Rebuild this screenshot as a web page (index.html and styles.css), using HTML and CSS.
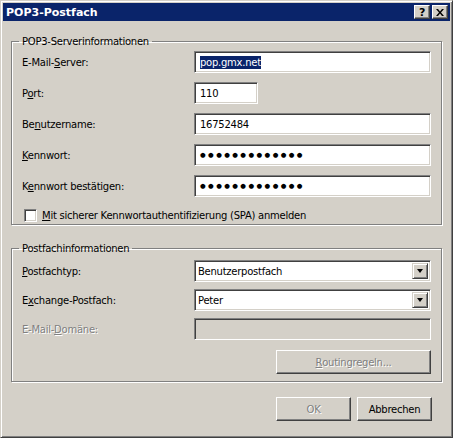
FILE: index.html
```html
<!DOCTYPE html>
<html lang="de">
<head>
    <meta charset="UTF-8">
    <meta name="viewport" content="width=device-width, initial-scale=1.0">
    <title>POP3-Postfach</title>
    <link rel="stylesheet" href="styles.css">
</head>
<body>
    <div class="window">
        <div class="titlebar">
            <span class="title">POP3-Postfach</span>
            <div class="caption-btns">
                <span class="cap-btn">?</span>
                <span class="cap-btn close">
                    <svg width="8" height="7" viewBox="0 0 8 7"><path d="M0 0h2l2 2.5L6 0h2L5 3.5 8 7H6L4 4.5 2 7H0l3-3.5z" fill="#000"/></svg>
                </span>
            </div>
        </div>

        <div class="content">
            <fieldset class="group">
                <legend>POP3-Serverinformationen</legend>
                <div class="form">
                    <label>E-Mail-<u>S</u>erver:</label>
                    <div class="field"><span class="sel">pop.gmx.net</span></div>

                    <label>P<u>o</u>rt:</label>
                    <div class="field short">110</div>

                    <label>Be<u>n</u>utzername:</label>
                    <div class="field">16752484</div>

                    <label><u>K</u>ennwort:</label>
                    <div class="field dots">●●●●●●●●●●●●●</div>

                    <label>K<u>e</u>nnwort bestätigen:</label>
                    <div class="field dots">●●●●●●●●●●●●●</div>
                </div>
                <div class="check">
                    <span class="box"></span>
                    <span><u>M</u>it sicherer Kennwortauthentifizierung (SPA) anmelden</span>
                </div>
            </fieldset>

            <fieldset class="group second">
                <legend>Postfachinformationen</legend>
                <div class="form tight">
                    <label><u>P</u>ostfachtyp:</label>
                    <div class="field combo">Benutzerpostfach<span class="arrow"></span></div>

                    <label>E<u>x</u>change-Postfach:</label>
                    <div class="field combo">Peter<span class="arrow"></span></div>

                    <label class="disabled">E-Mail-<u>D</u>omäne:</label>
                    <div class="field off"></div>
                </div>
                <div class="right">
                    <span class="btn wide disabled"><u>R</u>outingregeln...</span>
                </div>
            </fieldset>

            <div class="actions">
                <span class="btn disabled">OK</span>
                <span class="btn">Abbrechen</span>
            </div>
        </div>
    </div>
</body>
</html>
```

FILE: styles.css
```css
*{
    margin: 0;
    padding: 0;
    box-sizing: border-box;
}
body{
    background: #d4d0c8;
    font-family: "DejaVu Sans", Tahoma, sans-serif;
    font-size: 10px;
    letter-spacing: -0.25px;
    color: #000;
}
u{
    text-decoration: underline;
    text-underline-offset: 1px;
}
.window{
    width: 453px;
    height: 438px;
    background: #d4d0c8;
    border: 1px solid;
    border-color: #d4d0c8 #404040 #404040 #d4d0c8;
    box-shadow: inset 1px 1px 0 #fff, inset -1px -1px 0 #808080;
    padding: 2px;
}
.titlebar{
    height: 18px;
    background: #0a246a;
    display: flex;
    align-items: center;
    justify-content: space-between;
    padding: 0 2px 0 3px;
}
.title{
    color: #fff;
    font-weight: bold;
    font-size: 11px;
    letter-spacing: 0;
}
.caption-btns{
    display: flex;
}
.cap-btn{
    width: 16px;
    height: 14px;
    background: #d4d0c8;
    border: 1px solid;
    border-color: #fff #404040 #404040 #fff;
    box-shadow: inset -1px -1px 0 #808080;
    display: flex;
    align-items: center;
    justify-content: center;
    font-weight: bold;
    font-size: 11px;
    line-height: 1;
}
.cap-btn.close{
    margin-left: 2px;
}
.content{
    padding: 15px 8px 0 8px;
}
.group{
    border: 1px solid #808080;
    box-shadow: 1px 1px 0 #fff, inset 1px 1px 0 #fff;
    padding: 4px 10px 9px 10px;
    height: 189px;
}
.group legend{
    padding: 0 3px;
    margin-left: -3px;
    font-size: 10px;
}
.group.second{
    margin-top: 18px;
    height: 139px;
}
.form{
    display: grid;
    grid-template-columns: 172px 1fr;
    row-gap: 9px;
    align-items: center;
}
.form.tight{
    row-gap: 7px;
    padding-top: 2px;
}
.disabled{
    color: #808080;
    text-shadow: 1px 1px 0 #fff;
}
.field{
    height: 22px;
    background: #fff;
    border: 1px solid;
    border-color: #808080 #fff #fff #808080;
    box-shadow: inset 1px 1px 0 #404040, inset -1px -1px 0 #d4d0c8;
    display: flex;
    align-items: center;
    padding-left: 5px;
    font-size: 10px;
    position: relative;
}
.field.short{
    width: 64px;
}
.field.off{
    background: #d4d0c8;
}
.field.combo{
    padding-left: 3px;
}
.sel{
    background: #0a246a;
    color: #fff;
    padding: 1px 0;
}
.dots{
    font-size: 6.5px;
    letter-spacing: 2.4px;
}
.arrow{
    position: absolute;
    right: 2px;
    top: 2px;
    width: 16px;
    height: 16px;
    background: #d4d0c8;
    border: 1px solid;
    border-color: #d4d0c8 #404040 #404040 #d4d0c8;
    box-shadow: inset 1px 1px 0 #fff, inset -1px -1px 0 #808080;
}
.arrow::after{
    content: "";
    position: absolute;
    left: 4px;
    top: 5px;
    border-left: 3.5px solid transparent;
    border-right: 3.5px solid transparent;
    border-top: 4px solid #000;
}
.check{
    display: flex;
    align-items: center;
    gap: 5px;
    margin-top: 12px;
    padding-left: 2px;
}
.box{
    width: 13px;
    height: 13px;
    background: #fff;
    border: 1px solid;
    border-color: #808080 #fff #fff #808080;
    box-shadow: inset 1px 1px 0 #404040, inset -1px -1px 0 #d4d0c8;
}
.right{
    display: flex;
    justify-content: flex-end;
    margin-top: 10px;
}
.btn{
    width: 75px;
    height: 24px;
    background: #d4d0c8;
    border: 1px solid;
    border-color: #fff #404040 #404040 #fff;
    box-shadow: inset -1px -1px 0 #808080;
    display: flex;
    align-items: center;
    justify-content: center;
    font-size: 10px;
}
.btn.wide{
    width: 155px;
}
.actions{
    display: flex;
    justify-content: flex-end;
    gap: 6px;
    margin-top: 15px;
    padding-right: 10px;
}
```
